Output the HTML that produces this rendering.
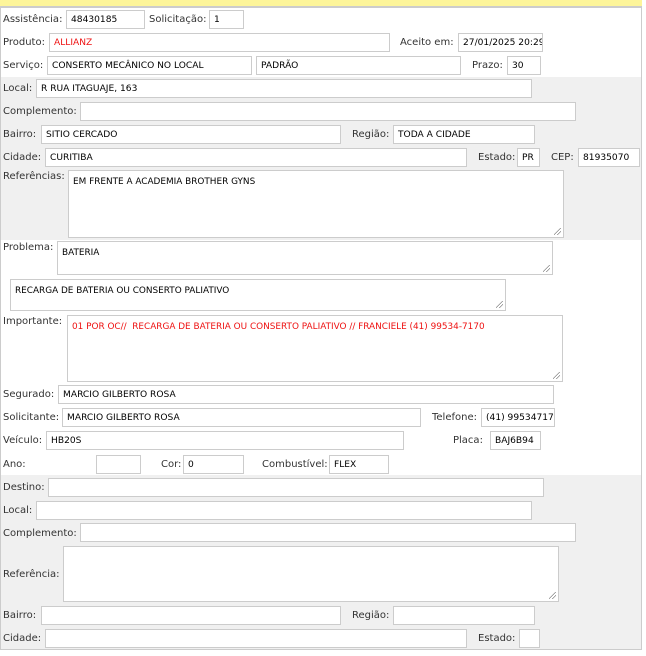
<!DOCTYPE html>
<html><head><meta charset="utf-8"><style>
body{margin:0;width:646px;height:656px;background:#fff;position:relative;overflow:hidden;font-family:"DejaVu Sans",Verdana,sans-serif;font-size:10px;color:#333}
.top{position:absolute;left:0;top:0;width:642px;height:6px;background:#fdf59a;border-bottom:2px solid #ccc}
.box{position:absolute;left:0;top:6px;width:640px;height:643px;border:1px solid #ccc;border-top:none}
.g{position:absolute;left:1px;width:640px;background:#f0f0f0}
.l{position:absolute;white-space:nowrap;line-height:12px}
.i{position:absolute;box-sizing:border-box;border:1px solid #ccc;background:#fff;height:19px;padding:3px 0 0 4px;white-space:nowrap;overflow:hidden;color:#000;line-height:12px;font-size:9.1px}
.t{padding-top:5px;font-size:8.9px}
.t:after{content:"";position:absolute;right:2px;bottom:2px;width:7px;height:7px;background:linear-gradient(135deg,transparent 45%,#888 45%,#888 52%,transparent 52%,transparent 70%,#888 70%,#888 77%,transparent 77%)}
</style></head><body>
<div class="top"></div>
<div class="box"></div>
<div class="g" style="top:77px;height:163px"></div>
<div class="g" style="top:475px;height:174px"></div>

<div class="l" style="left:3px;top:14px">Assistência:</div><div class="i" style="left:66px;top:10px;width:79px">48430185</div>
<div class="l" style="left:149px;top:14px">Solicitação:</div><div class="i" style="left:209px;top:10px;width:35px">1</div>

<div class="l" style="left:3px;top:37px">Produto:</div><div class="i" style="left:49px;top:33px;width:341px;color:#e11">ALLIANZ</div>
<div class="l" style="left:400px;top:37px">Aceito em:</div><div class="i" style="left:458px;top:33px;width:85px">27/01/2025 20:29</div>

<div class="l" style="left:3px;top:60px">Serviço:</div><div class="i" style="left:47px;top:56px;width:205px">CONSERTO MECÂNICO NO LOCAL</div>
<div class="i" style="left:256px;top:56px;width:205px">PADRÃO</div>
<div class="l" style="left:472px;top:60px">Prazo:</div><div class="i" style="left:507px;top:56px;width:34px">30</div>

<div class="l" style="left:3px;top:83px">Local:</div><div class="i" style="left:36px;top:79px;width:496px">R RUA ITAGUAJE, 163</div>
<div class="l" style="left:3px;top:106px">Complemento:</div><div class="i" style="left:80px;top:102px;width:496px"></div>
<div class="l" style="left:3px;top:129px">Bairro:</div><div class="i" style="left:41px;top:125px;width:300px">SITIO CERCADO</div>
<div class="l" style="left:352px;top:129px">Região:</div><div class="i" style="left:393px;top:125px;width:142px">TODA A CIDADE</div>
<div class="l" style="left:3px;top:152px">Cidade:</div><div class="i" style="left:45px;top:148px;width:422px">CURITIBA</div>
<div class="l" style="left:478px;top:152px">Estado:</div><div class="i" style="left:517px;top:148px;width:23px">PR</div>
<div class="l" style="left:551px;top:152px">CEP:</div><div class="i" style="left:578px;top:148px;width:62px">81935070</div>
<div class="l" style="left:3px;top:171px">Referências:</div><div class="i t" style="left:68px;top:170px;width:496px;height:68px">EM FRENTE A ACADEMIA BROTHER GYNS</div>

<div class="l" style="left:3px;top:242px">Problema:</div><div class="i t" style="left:57px;top:241px;width:496px;height:34px">BATERIA</div>
<div class="i t" style="left:10px;top:279px;width:496px;height:32px">RECARGA DE BATERIA OU CONSERTO PALIATIVO</div>
<div class="l" style="left:3px;top:316px">Importante:</div><div class="i t" style="left:67px;top:315px;width:496px;height:67px;color:#e11">01 POR OC//&nbsp; RECARGA DE BATERIA OU CONSERTO PALIATIVO // FRANCIELE (41) 99534-7170</div>

<div class="l" style="left:3px;top:389px">Segurado:</div><div class="i" style="left:58px;top:385px;width:496px">MARCIO GILBERTO ROSA</div>
<div class="l" style="left:3px;top:412px">Solicitante:</div><div class="i" style="left:62px;top:408px;width:359px">MARCIO GILBERTO ROSA</div>
<div class="l" style="left:432px;top:412px">Telefone:</div><div class="i" style="left:481px;top:408px;width:74px">(41) 995347170</div>
<div class="l" style="left:3px;top:435px">Veículo:</div><div class="i" style="left:46px;top:431px;width:358px">HB20S</div>
<div class="l" style="left:453px;top:435px">Placa:</div><div class="i" style="left:490px;top:431px;width:51px">BAJ6B94</div>
<div class="l" style="left:3px;top:459px">Ano:</div><div class="i" style="left:96px;top:455px;width:45px"></div>
<div class="l" style="left:161px;top:459px">Cor:</div><div class="i" style="left:183px;top:455px;width:61px">0</div>
<div class="l" style="left:262px;top:459px">Combustível:</div><div class="i" style="left:329px;top:455px;width:60px">FLEX</div>

<div class="l" style="left:3px;top:482px">Destino:</div><div class="i" style="left:48px;top:478px;width:496px"></div>
<div class="l" style="left:3px;top:505px">Local:</div><div class="i" style="left:36px;top:501px;width:496px"></div>
<div class="l" style="left:3px;top:528px">Complemento:</div><div class="i" style="left:80px;top:523px;width:496px"></div>
<div class="l" style="left:3px;top:569px">Referência:</div><div class="i t" style="left:63px;top:546px;width:496px;height:56px"></div>
<div class="l" style="left:3px;top:610px">Bairro:</div><div class="i" style="left:41px;top:606px;width:300px"></div>
<div class="l" style="left:352px;top:610px">Região:</div><div class="i" style="left:393px;top:606px;width:142px"></div>
<div class="l" style="left:3px;top:633px">Cidade:</div><div class="i" style="left:45px;top:629px;width:422px"></div>
<div class="l" style="left:478px;top:633px">Estado:</div><div class="i" style="left:519px;top:629px;width:21px"></div>
</body></html>
